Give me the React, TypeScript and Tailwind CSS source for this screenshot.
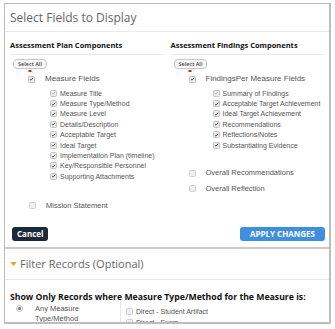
import type { ReactNode } from 'react'

const planFields = [
  'Measure Title',
  'Measure Type/Method',
  'Measure Level',
  'Details/Description',
  'Acceptable Target',
  'Ideal Target',
  'Implementation Plan (timeline)',
  'Key/Responsible Personnel',
  'Supporting Attachments',
]

const findingFields = [
  'Summary of Findings',
  'Acceptable Target Achievement',
  'Ideal Target Achievement',
  'Recommendations',
  'Reflections/Notes',
  'Substantiating Evidence',
]

function Check({ checked, disabled }: { checked?: boolean; disabled?: boolean }) {
  return (
    <span
      className={`flex h-[7px] w-[7px] shrink-0 items-center justify-center rounded-[1.5px] border ${
        checked ? 'border-[#c2c2c2] bg-[#ececec]' : 'border-[#cfcfcf] bg-[#efefef]'
      }`}
    >
      {checked && (
        <svg viewBox="0 0 10 10" className="h-[6px] w-[6px]">
          <path
            d="M1.8 5.2 4 7.4 8.4 2.4"
            fill="none"
            stroke={disabled ? '#b0b0b0' : '#3a3a3a'}
            strokeWidth="1.7"
          />
        </svg>
      )}
    </span>
  )
}

function SubItem({ label, disabled }: { label: string; disabled?: boolean }) {
  return (
    <div className="flex h-[10.4px] items-center gap-[3px]">
      <Check checked disabled={disabled} />
      <span className="text-[7px] leading-none text-[#555]">{label}</span>
    </div>
  )
}

function SelectAll() {
  return (
    <div className="relative w-fit">
      <span className="block rounded-[4px] border border-[#c8c8c8] bg-[#f7f7f7] px-[4px] py-[1px] text-[5.5px] font-semibold leading-[6px] text-[#444] [font-family:'Open_Sans',sans-serif]">
        Select All
      </span>
      <span className="absolute left-1/2 top-[11px] h-[2px] w-[3px] -translate-x-1/2 bg-[#e0241b]" />
    </div>
  )
}

function Column({
  title,
  head,
  children,
  headPad,
  subPad,
}: {
  title: string
  head: string
  children: ReactNode
  headPad: string
  subPad: string
}) {
  return (
    <div className="flex flex-col">
      <div className="border-b border-[#e6e9ee] pb-[4px] text-[7.5px] font-bold leading-[10px] text-[#111] [font-family:'Open_Sans',sans-serif]">
        {title}
      </div>
      <div className="mt-[4px] pl-[3px]">
        <SelectAll />
      </div>
      <div className={`mt-[6px] flex items-center ${headPad}`}>
        <Check checked />
        <span className="ml-[10px] text-[8px] leading-none text-[#555]">{head}</span>
      </div>
      <div className={`mt-[5px] flex flex-col ${subPad}`}>{children}</div>
    </div>
  )
}

export default function App() {
  return (
    <div className="h-[329px] w-[335px] bg-white pl-[4px] pt-[3px] [font-family:'Liberation_Sans',Arial,sans-serif]">
      <div className="h-[321px] w-[327px] overflow-hidden border border-b-2 border-r-2 border-[#bdbdbd] bg-white">
        <div className="flex h-[28px] items-center border-b border-[#e8ecf0] px-[5px] text-[12px] text-[#666] [font-family:'Open_Sans',sans-serif]">
          Select Fields to Display
        </div>

        <div className="grid grid-cols-2 gap-[7px] px-[5px] pt-[8px]">
          <div className="flex flex-col">
            <Column
              title="Assessment Plan Components"
              head="Measure Fields"
              headPad="pl-[18px]"
              subPad="pl-[40px]"
            >
              {planFields.map((f, i) => (
                <SubItem key={f} label={f} disabled={i === 0} />
              ))}
            </Column>
            <div className="mt-[20px] flex items-center pl-[19px]">
              <Check />
              <span className="ml-[10px] text-[7.5px] leading-none text-[#555]">Mission Statement</span>
            </div>
          </div>
          <div className="flex flex-col">
            <Column
              title="Assessment Findings Components"
              head="FindingsPer Measure Fields"
              headPad="pl-[18px]"
              subPad="pl-[42px]"
            >
              {findingFields.map((f, i) => (
                <SubItem key={f} label={f} disabled={i === 0} />
              ))}
            </Column>
            <div className="mt-[19px] flex flex-col gap-[8px] pl-[18px]">
              <div className="flex items-center">
                <Check />
                <span className="ml-[10px] text-[7.5px] leading-none text-[#555]">Overall Recommendations</span>
              </div>
              <div className="flex items-center">
                <Check />
                <span className="ml-[10px] text-[7.5px] leading-none text-[#555]">Overall Reflection</span>
              </div>
            </div>
          </div>
        </div>

        <div className="mt-[18px] flex items-center justify-between pb-[6px] pl-[7px] pr-[4px] [font-family:'Open_Sans',sans-serif]">
          <button className="h-[14px] rounded-[3px] bg-[#1d2939] px-[5px] text-[8px] font-bold leading-none text-white">
            Cancel
          </button>
          <button className="h-[14px] rounded-[3px] bg-[#3e8fdf] px-[10px] text-[8px] font-bold leading-none text-white">
            APPLY CHANGES
          </button>
        </div>

        <div className="border-t-2 border-[#c8c8c8]">
          <div className="flex h-[31px] items-center gap-[3px] border-b border-[#e8ecf0] px-[5px] text-[11px] text-[#666] [font-family:'Open_Sans',sans-serif]">
            <svg viewBox="0 0 10 6" className="h-[4px] w-[7px]">
              <path d="M0 0h10L5 6z" fill="#f0a030" />
            </svg>
            Filter Records (Optional)
          </div>
          <div className="px-[5px] pt-[12px] text-[8.7px] font-bold leading-[10px] text-[#111] [font-family:'Open_Sans',sans-serif]">
            Show Only Records where Measure Type/Method for the Measure is:
          </div>
          <div className="flex">
            <div className="flex w-[115px] gap-[12px] pl-[11px] pt-[2px]">
              <span className="mt-[1px] flex h-[7px] w-[7px] items-center justify-center rounded-full border border-[#c4c4c4] bg-[#eee]">
                <span className="h-[3px] w-[3px] rounded-full bg-[#777]" />
              </span>
              <span className="text-[7.5px] leading-[9.5px] text-[#555]">
                Any Measure
                <br />
                Type/Method
              </span>
            </div>
            <div className="flex flex-col gap-[4px] border-l border-[#e6e6e6] pl-[5px] pt-[6px]">
              <div className="flex items-center gap-[3px]">
                <Check />
                <span className="text-[7px] leading-none text-[#555]">Direct - Student Artifact</span>
              </div>
              <div className="flex items-center gap-[3px]">
                <Check />
                <span className="text-[7px] leading-none text-[#555]">Direct - Exam</span>
              </div>
            </div>
          </div>
        </div>
      </div>
    </div>
  )
}
